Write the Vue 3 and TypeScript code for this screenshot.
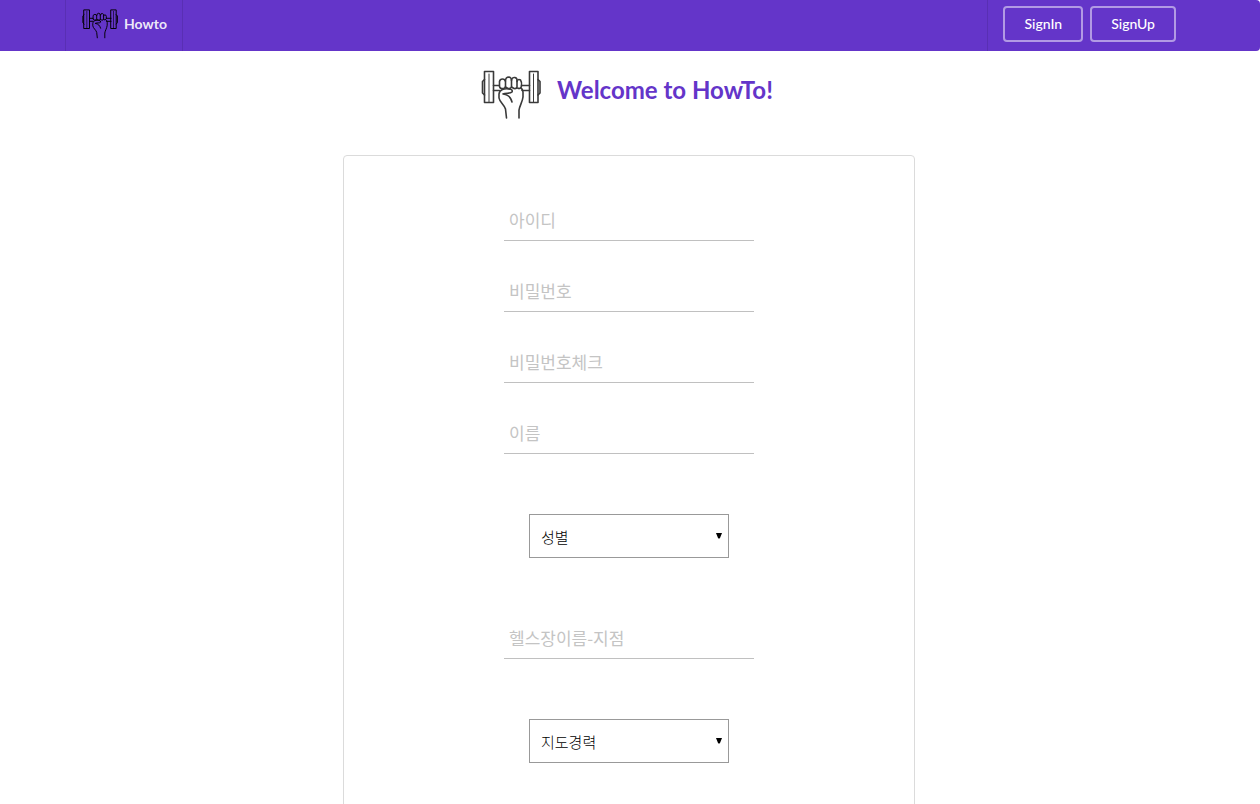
<script setup lang="ts">
import { reactive } from 'vue'

interface TextField {
  kind: 'text' | 'password'
  id: string
  label: string
}

interface SelectField {
  kind: 'select'
  id: string
  label: string
  options: string[]
}

const fields: (TextField | SelectField)[] = [
  { kind: 'text', id: 'userId', label: '아이디' },
  { kind: 'password', id: 'password', label: '비밀번호' },
  { kind: 'password', id: 'passwordCheck', label: '비밀번호체크' },
  { kind: 'text', id: 'name', label: '이름' },
  { kind: 'select', id: 'gender', label: '성별', options: [] },
  { kind: 'text', id: 'gym', label: '헬스장이름-지점' },
  { kind: 'select', id: 'career', label: '지도경력', options: [] },
]

const form = reactive<Record<string, string>>(
  Object.fromEntries(fields.map((f) => [f.id, ''])),
)
</script>

<template>
  <svg class="defs" aria-hidden="true">
    <symbol id="dumbbell" viewBox="0 0 60 50">
      <g fill="none" stroke="currentColor" stroke-linecap="round" stroke-linejoin="round">
        <path d="M3.5 1.5H12.5V32.5H3.5ZM48.5 1.5H57V32.5H48.5Z" />
        <path stroke-width="1" d="M8 4V32.5M52.500 4V32.5" />
        <path d="M3.5 9.500L1.500 11.500V23L3.500 25M57 9.500L59 11.500V23L57 25" />
        <path d="M12.500 15.500H18M12.500 20.500H18.500M40.500 15.500H48.500M41 20.500H48.500" />
        <path d="M18.500 16.500V11.500Q19 9 21.500 9Q24 9 24.500 11.500V16.500Q23.500 19 21.500 18.500Q19 19 18.500 16.500" />
        <path d="M24.500 11Q24.500 7 28 7Q30.500 7.500 30.500 10.500V17Q29.500 19 27 18.500L24.500 17" />
        <path d="M30.500 10.500Q31 7 34 7.500Q36.500 8 36 11.500V17Q35.500 19 33 18.500L30.500 17" />
        <path d="M36 11.500Q37 8.500 39.500 10Q41 12 40.500 16Q39.500 19.500 36.500 18" />
        <path d="M29 19C23 18 18.500 19.500 18 24V28C18.500 32 23.500 35 24.500 39L25.500 48" />
        <path d="M28.500 19Q32 19.500 31 22C29 24 25 22.500 22 24C27 24.500 30 28 31 32" />
        <path d="M40 18Q42 19.500 42 22V27C41.500 32 38.500 36 38 40V48" />
      </g>
    </symbol>
  </svg>

  <header class="bar">
    <nav class="bar-inner" aria-label="Main">
      <a class="brand" href="#">
        <svg class="brand-icon" aria-hidden="true"><use href="#dumbbell" /></svg>
        Howto
      </a>
      <div class="actions">
        <button type="button" class="outline">SignIn</button>
        <button type="button" class="outline">SignUp</button>
      </div>
    </nav>
  </header>

  <main class="page">
    <h1 class="title">
      <svg class="title-icon" aria-hidden="true"><use href="#dumbbell" /></svg>
      Welcome to HowTo!
    </h1>

    <form class="panel" @submit.prevent>
      <template v-for="field in fields" :key="field.id">
        <div v-if="field.kind === 'select'" class="choice">
          <select :id="field.id" v-model="form[field.id]" :aria-label="field.label">
            <option value="">{{ field.label }}</option>
            <option v-for="option in field.options" :key="option">{{ option }}</option>
          </select>
          <svg class="arrow" viewBox="0 0 6 6" aria-hidden="true">
            <path d="M0 0H6L4 5Q3 6 2 5Z" />
          </svg>
        </div>
        <input
          v-else
          :id="field.id"
          v-model="form[field.id]"
          class="line"
          :type="field.kind"
          :placeholder="field.label"
          :aria-label="field.label"
        />
      </template>
    </form>
  </main>
</template>

<style>
body {
  margin: 0;
  background: #fff;
}
</style>

<style scoped>
.defs {
  position: absolute;
  width: 0;
  height: 0;
}

.bar {
  background: #6435c9;
  border-radius: 0 4px 4px 0;
  padding: 0 65px;
  font-family: Lato, sans-serif;
}

.bar-inner {
  display: flex;
  justify-content: space-between;
  height: 51px;
}

.brand {
  display: flex;
  align-items: center;
  gap: 6px;
  padding: 0 15px 4px 16px;
  border: solid rgba(0, 0, 0, 0.1);
  border-width: 0 1px;
  color: rgba(255, 255, 255, 0.9);
  font-size: 14px;
  font-weight: 700;
  text-decoration: none;
}

.brand-icon {
  width: 36px;
  height: 30px;
  color: #000;
  stroke-width: 1.6;
}

.actions {
  display: flex;
  align-items: flex-start;
  gap: 7px;
  padding: 6px 19px 0 15px;
  border-left: 1px solid rgba(0, 0, 0, 0.1);
}

.outline {
  height: 36px;
  padding: 0 19px;
  border: 2px solid rgba(255, 255, 255, 0.5);
  border-radius: 4px;
  background: transparent;
  color: #fff;
  font: 500 14px/32px Lato, sans-serif;
  cursor: pointer;
}

.page {
  display: flex;
  flex-direction: column;
  align-items: center;
  padding: 19px 20px 0;
}

.title {
  display: flex;
  align-items: flex-start;
  gap: 16px;
  margin: 0 6px 35px 0;
  color: #6435c9;
  font: 700 24px/40px Lato, sans-serif;
}

.title-icon {
  width: 60px;
  height: 50px;
  color: #3a3a3a;
  stroke-width: 1.6;
}

.panel {
  box-sizing: border-box;
  display: flex;
  flex-direction: column;
  align-items: center;
  gap: 30px;
  width: 100%;
  max-width: 572px;
  margin-right: 2px;
  padding: 44px 20px 60px;
  border: 1px solid #dbdbdb;
  border-radius: 4px;
  font-family: "Noto Sans CJK KR", sans-serif;
}

.line {
  box-sizing: border-box;
  width: 250px;
  max-width: 100%;
  height: 41px;
  padding: 0 5px 2px;
  border: 0;
  border-bottom: 1px solid #c0c0c0;
  outline: 0;
  background: transparent;
  color: #333;
  font: 400 17px/24px "Noto Sans CJK KR", sans-serif;
}

.line::placeholder {
  color: #c4c4c4;
  opacity: 1;
}

.choice {
  position: relative;
  width: 200px;
  margin: 30px 0;
}

.choice select {
  appearance: none;
  display: block;
  width: 100%;
  height: 44px;
  padding: 2px 24px 0 11px;
  border: 1px solid #999;
  border-radius: 0;
  background: #fff;
  color: #000;
  font: 300 15px/24px "Noto Sans CJK KR", sans-serif;
}

.arrow {
  position: absolute;
  top: 19px;
  right: 7px;
  width: 6px;
  height: 6px;
  pointer-events: none;
}
</style>
